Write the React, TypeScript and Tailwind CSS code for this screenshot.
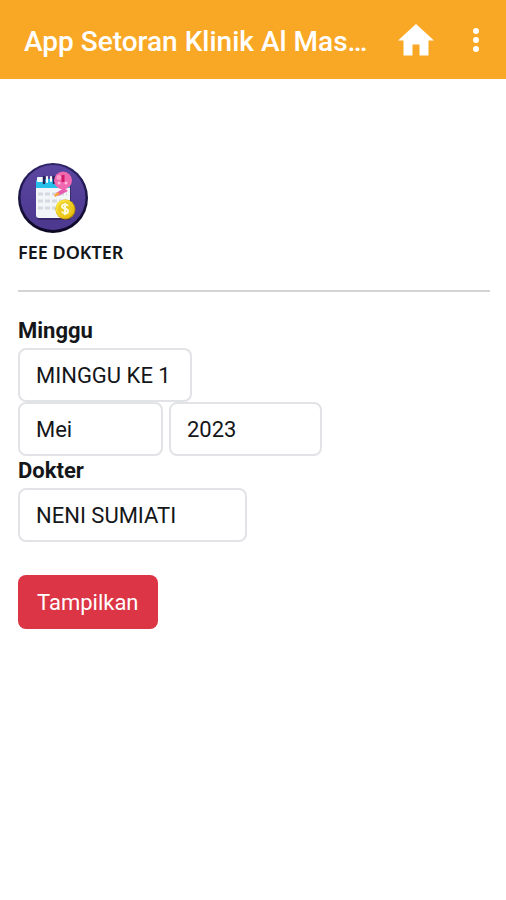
import React from "react";

type FieldProps = {
  id: string;
  label: string;
  options: string[];
  width: string;
};

function SelectField({ id, label, options, width }: FieldProps) {
  return (
    <select
      id={id}
      aria-label={label}
      className={`h-[54px] appearance-none rounded-lg border-2 border-[#e2e3e6] bg-white px-4 text-[22px] text-[#141619] ${width}`}
    >
      {options.map((option) => (
        <option key={option}>{option}</option>
      ))}
    </select>
  );
}

function FeeIcon() {
  return (
    <svg viewBox="0 0 70 70" className="size-[70px]" role="img" aria-label="Fee dokter">
      <defs>
        <linearGradient id="disc" x1="0" y1="0" x2="0" y2="1">
          <stop offset="0" stopColor="#5a45a0" />
          <stop offset="1" stopColor="#4d388f" />
        </linearGradient>
        <linearGradient id="rim" x1="0" y1="0" x2="0" y2="1">
          <stop offset="0" stopColor="#2c2468" />
          <stop offset="1" stopColor="#0c0722" />
        </linearGradient>
        <linearGradient id="coin" x1="0" y1="0" x2="1" y2="1">
          <stop offset="0" stopColor="#ffee4a" />
          <stop offset="1" stopColor="#e3b400" />
        </linearGradient>
      </defs>
      <circle cx="35" cy="35" r="35" fill="url(#rim)" />
      <circle cx="35" cy="34.5" r="32.5" fill="url(#disc)" />
      <rect x="19" y="19" width="34" height="38" rx="3" fill="#20173f" opacity="0.5" />
      <rect x="18" y="17" width="34" height="38" rx="3" fill="#f3f6f9" />
      <path d="M18 25v-6a3 3 0 0 1 3-3h28a3 3 0 0 1 3 3v6z" fill="#27c0ea" />
      <rect x="19" y="14" width="7" height="5" rx="1" fill="#f2f8fc" />
      <path d="M26 14v6M36 14v6" stroke="#262557" strokeWidth="2.5" strokeLinecap="round" />
      <path d="M29 14v5M33 14v4" stroke="#fff" strokeWidth="2" strokeLinecap="round" />
      <path d="M20 31h29M20 38h29M20 45h18" stroke="#d5dae2" strokeWidth="3" strokeDasharray="5 2" />
      <path d="M38 30l8-5 4 3-10 5z" fill="#e95bb1" />
      <path d="M36 32l4-3 2 2-5 3z" fill="#f7a23a" />
      <circle cx="45" cy="17.5" r="9" fill="#f068b0" />
      <circle cx="41" cy="14.5" r="2.5" fill="#f99bcb" />
      <path d="M45 12v7" stroke="#d31b69" strokeWidth="3" />
      <circle cx="41" cy="20" r="1.5" fill="#ffb8d8" />
      <circle cx="48" cy="20" r="1.5" fill="#ffb8d8" />
      <circle cx="47.5" cy="46.5" r="10" fill="#b98c06" />
      <circle cx="47" cy="46" r="9.5" fill="url(#coin)" />
      <circle cx="47" cy="46" r="7" fill="#eccb25" />
      <path
        d="M50 43c-1-2-6-2-6 .5S50 45 50 48s-5 3-6 .5M47 40v12"
        fill="none"
        stroke="#fffbd8"
        strokeWidth="2"
      />
    </svg>
  );
}

export default function App() {
  return (
    <div className="min-h-screen bg-white font-[Roboto,sans-serif] text-[#141619]">
      <header className="flex h-[79px] items-center bg-[#f9a825] pl-6 pr-3 text-white">
        <h1 className="min-w-0 flex-1 truncate pt-1 text-[28px] font-medium">App Setoran Klinik Al Mas…</h1>
        <button type="button" aria-label="Beranda" className="ml-4 flex size-11 items-center justify-center">
          <svg viewBox="0 0 36 32" className="h-8 w-9" fill="currentColor" aria-hidden="true">
            <path d="M14.5 31.5V20.5h7v11h9V16.5H36L18 0 0 16.5h5.5v15z" />
          </svg>
        </button>
        <button type="button" aria-label="Menu" className="ml-5 flex h-11 w-9 items-center justify-center">
          <svg viewBox="0 0 8 24" className="h-6 w-2" fill="currentColor" aria-hidden="true">
            <circle cx="4" cy="3" r="3" />
            <circle cx="4" cy="12" r="3" />
            <circle cx="4" cy="21" r="3" />
          </svg>
        </button>
      </header>

      <main className="pl-[18px] pr-4 pt-[84px]">
        <FeeIcon />
        <h2 className="mt-[7px] font-['Noto_Sans',sans-serif] text-lg/6 font-semibold">FEE DOKTER</h2>
        <hr className="mt-[26px] border-t-2 border-[#d4d4d4]" />

        <form className="mt-6" onSubmit={(event) => event.preventDefault()}>
          <label htmlFor="minggu" className="block h-8 text-[22px]/[30px] font-bold">
            Minggu
          </label>
          <div className="flex">
            <SelectField id="minggu" label="Minggu" options={["MINGGU KE 1"]} width="w-[174px]" />
          </div>
          <div className="flex gap-1.5">
            <SelectField id="bulan" label="Bulan" options={["Mei"]} width="w-[145px]" />
            <SelectField id="tahun" label="Tahun" options={["2023"]} width="w-[153px]" />
          </div>
          <label htmlFor="dokter" className="block h-8 text-[22px]/[30px] font-bold">
            Dokter
          </label>
          <div className="flex">
            <SelectField id="dokter" label="Dokter" options={["NENI SUMIATI"]} width="w-[229px]" />
          </div>
          <button
            type="submit"
            className="mt-[33px] h-[54px] rounded-lg bg-[#dc3545] px-[19px] text-[22px] text-white"
          >
            Tampilkan
          </button>
        </form>
      </main>
    </div>
  );
}
